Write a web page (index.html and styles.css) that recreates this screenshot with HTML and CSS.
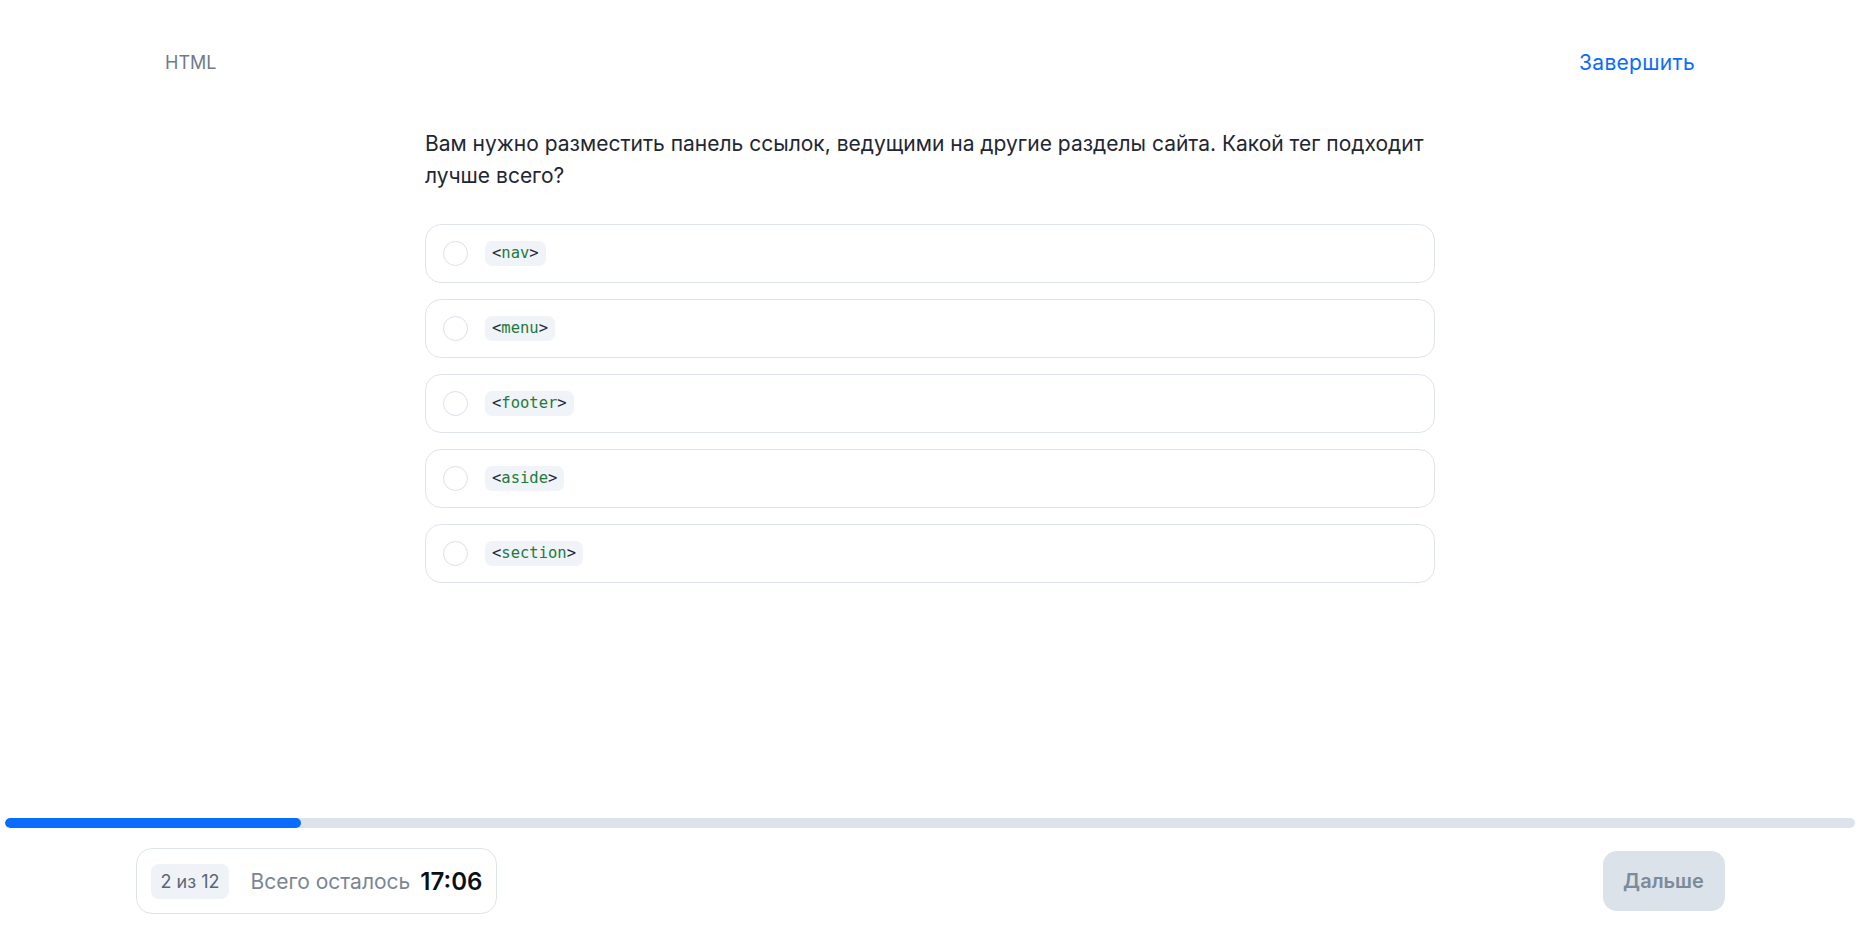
FILE: index.html
```html
<!DOCTYPE html>
<html lang="ru">
<head>
<meta charset="utf-8">
<title>Тест HTML</title>
<link rel="stylesheet" href="styles.css">
</head>
<body>
<div class="page">
  <header class="top">
    <span class="topic">HTML</span>
    <a class="finish" href="#">Завершить</a>
  </header>
  <main class="quiz">
    <p class="question">Вам нужно разместить панель ссылок, ведущими на другие разделы сайта. Какой тег подходит лучше всего?</p>
    <ul class="options">
      <li class="option"><span class="radio"></span><code class="tag"><span class="p">&lt;</span><span class="n">nav</span><span class="p">&gt;</span></code></li>
      <li class="option"><span class="radio"></span><code class="tag"><span class="p">&lt;</span><span class="n">menu</span><span class="p">&gt;</span></code></li>
      <li class="option"><span class="radio"></span><code class="tag"><span class="p">&lt;</span><span class="n">footer</span><span class="p">&gt;</span></code></li>
      <li class="option"><span class="radio"></span><code class="tag"><span class="p">&lt;</span><span class="n">aside</span><span class="p">&gt;</span></code></li>
      <li class="option"><span class="radio"></span><code class="tag"><span class="p">&lt;</span><span class="n">section</span><span class="p">&gt;</span></code></li>
    </ul>
  </main>
  <footer class="bottom">
    <div class="progress"><div class="progress-fill" style="width:16%"></div></div>
    <div class="bar">
      <div class="status">
        <span class="count">2 из 12</span>
        <span class="left-label">Всего осталось</span>
        <span class="timer">17:06</span>
      </div>
      <button class="next" type="button">Дальше</button>
    </div>
  </footer>
</div>
</body>
</html>
```

FILE: styles.css
```css
* { box-sizing: border-box; }
html, body { margin: 0; padding: 0; background: #fff; }
body {
  font-family: Inter, "Noto Sans", "Liberation Sans", sans-serif;
  color: #1d2430;
}
.page {
  min-height: 100vh;
  display: flex;
  flex-direction: column;
}
.top {
  width: 1530px;
  margin: 0 auto;
  padding-top: 49px;
  display: flex;
  justify-content: space-between;
  align-items: center;
  height: 76px;
}
.topic {
  font-size: 18px;
  color: #6f7b8a;
  line-height: 26px;
}
.finish {
  font-size: 21px;
  letter-spacing: 0.3px;
  color: #0a6cff;
  text-decoration: none;
  line-height: 26px;
}
.quiz {
  flex: 1;
  width: 1010px;
  margin: 0 auto;
  padding-top: 52px;
}
.question {
  margin: 0 0 32px;
  font-size: 21px;
  line-height: 32px;
  color: #1f2733;
}
.options {
  list-style: none;
  margin: 0;
  padding: 0;
  display: flex;
  flex-direction: column;
  gap: 16px;
}
.option {
  height: 59px;
  border: 1px solid #dfe4eb;
  border-radius: 16px;
  display: flex;
  align-items: center;
  padding: 0 17px;
  gap: 17px;
}
.radio {
  width: 25px;
  height: 25px;
  border: 1px solid #dbe1e8;
  border-radius: 50%;
  flex: none;
}
.tag {
  display: inline-block;
  font-family: "DejaVu Sans Mono", "Liberation Mono", monospace;
  font-size: 15.5px;
  line-height: 25px;
  height: 25px;
  padding: 0 7px;
  border-radius: 7px;
  background: #f0f3f7;
}
.tag .p { color: #1e2a3b; }
.tag .n { color: #237a3c; }
.bottom {
  padding: 0 5px 21px;
}
.progress {
  height: 10px;
  border-radius: 5px;
  background: #dde3ea;
  overflow: hidden;
}
.progress-fill {
  height: 100%;
  border-radius: 5px;
  background: #0a6cff;
}
.bar {
  width: 1589px;
  margin: 20px auto 0;
  display: flex;
  justify-content: space-between;
  align-items: center;
}
.status {
  height: 66px;
  border: 1px solid #dfe4eb;
  border-radius: 16px;
  display: flex;
  align-items: center;
  padding: 0 14px;
}
.count {
  height: 35px;
  padding: 0 10px;
  border-radius: 8px;
  background: #eff2f6;
  color: #5b6776;
  font-size: 18px;
  line-height: 35px;
}
.left-label {
  margin-left: 21px;
  font-size: 21px;
  color: #7b8694;
}
.timer {
  margin-left: 10px;
  font-size: 24px;
  font-weight: 600;
  color: #0b0f16;
}
.next {
  width: 122px;
  height: 60px;
  border: 0;
  border-radius: 14px;
  background: #dbe2ea;
  color: #7c8b9c;
  font-family: inherit;
  font-size: 20px;
  font-weight: 600;
  cursor: default;
}
```
